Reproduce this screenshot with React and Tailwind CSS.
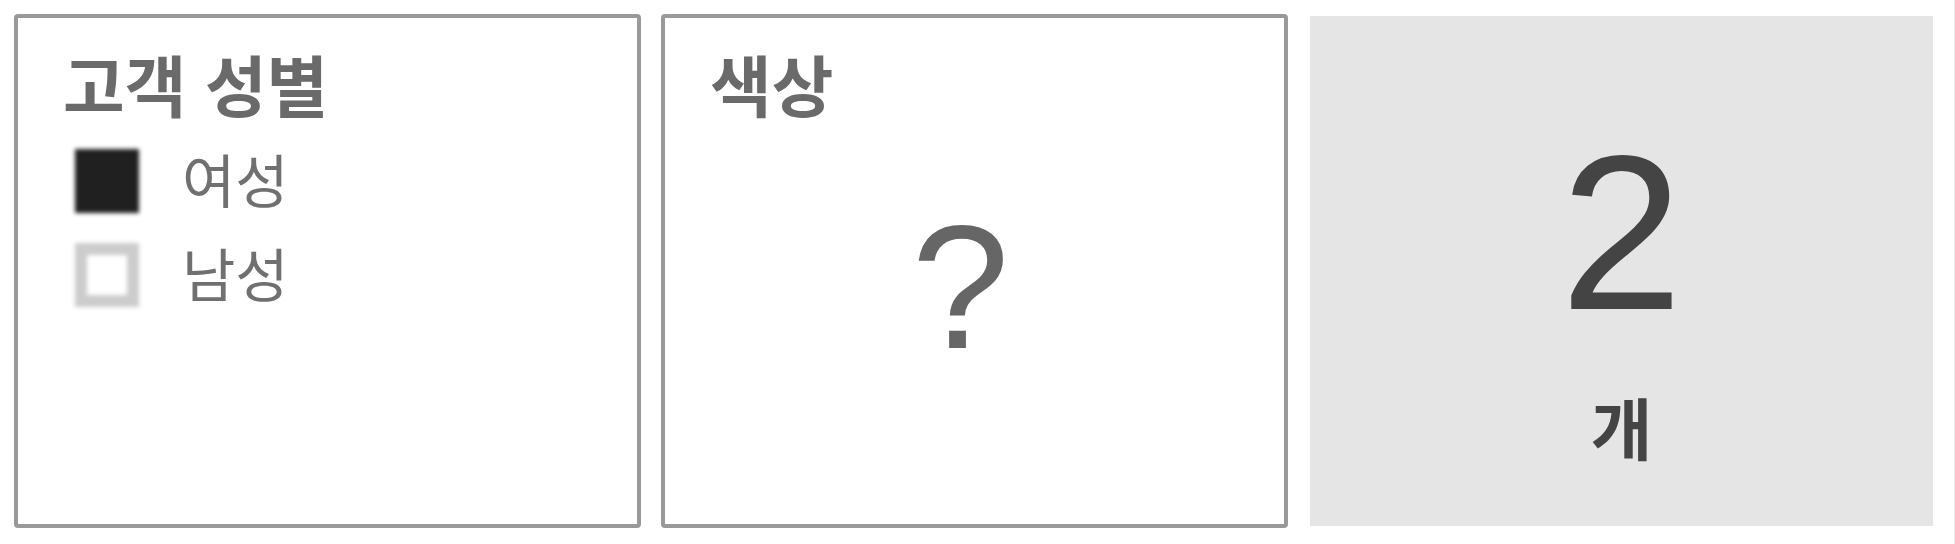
import React from "react";

const genders = [
  { label: "여성", checked: true },
  { label: "남성", checked: false },
];

const Filter = ({ title, children }) => {
  return (
    <section className="flex flex-col rounded-sm border-4 border-[#999999] bg-white px-[45px] pt-[33px] pb-4">
      <h2 className="text-[67px] leading-[76px] font-bold text-[#6a6a6a]">{title}</h2>
      {children}
    </section>
  );
};

const App = () => {
  return (
    <main className="min-h-screen border-r border-[#e5e5e5] bg-white pt-[14px] pr-[19px] pb-[16px] pl-[14px] font-['Liberation_Sans','Noto_Sans_CJK_KR',sans-serif]">
      <div className="grid min-h-[514px] grid-cols-3 gap-5">
        <Filter title="고객 성별">
          <ul className="mt-[23px] flex flex-col gap-7 px-3">
            {genders.map((gender) => (
              <li key={gender.label}>
                <label className="flex h-[66px] items-center gap-[43px] text-[58px] leading-[66px] text-[#707070]">
                  <input
                    type="checkbox"
                    defaultChecked={gender.checked}
                    className="mb-1 size-[64px] appearance-none border-[12px] border-[#cccccc] bg-white blur-[2px] checked:border-[#202020] checked:bg-[#202020]"
                  />
                  {gender.label}
                </label>
              </li>
            ))}
          </ul>
        </Filter>

        <Filter title="색상">
          <p className="mt-[70px] pr-7 text-center text-[176px] leading-[180px] text-[#666666]">?</p>
        </Filter>

        <section className="m-[2px] flex flex-col items-center gap-[46px] bg-[#e5e5e5] pt-[102px] text-[#444444]">
          <strong className="text-[220px] leading-[230px] font-normal">2</strong>
          <span className="text-[67px] leading-[76px] font-bold">개</span>
        </section>
      </div>
    </main>
  );
};

export default App;
